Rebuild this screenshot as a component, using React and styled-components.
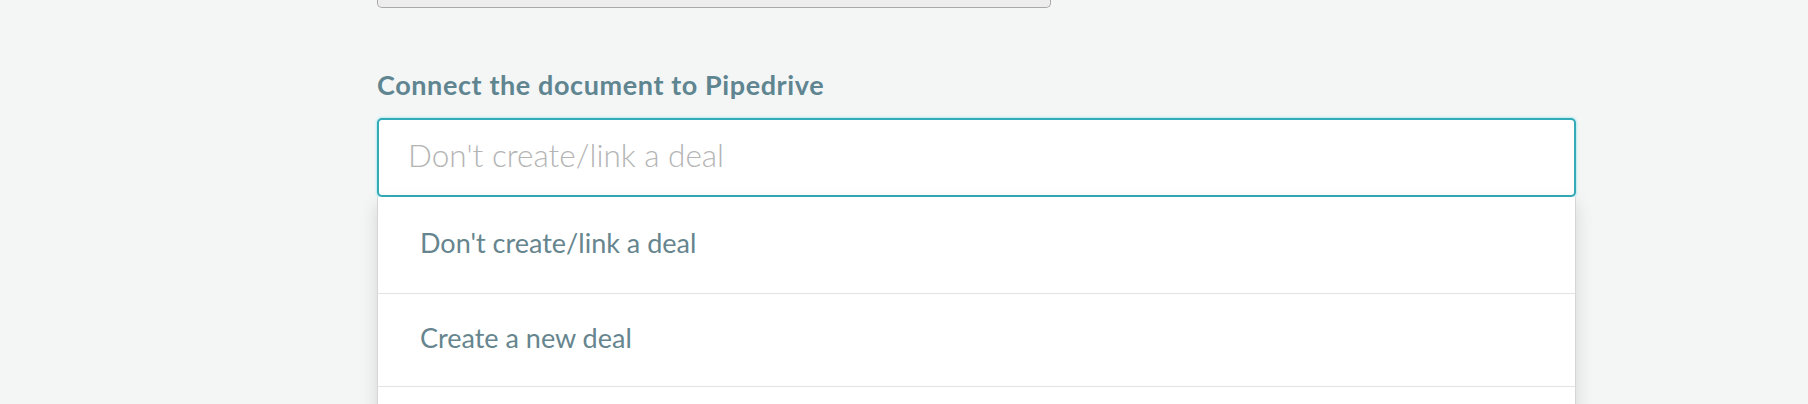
import React from "react";
import styled, { createGlobalStyle } from "styled-components";

const Global = createGlobalStyle`
  html, body { margin: 0; padding: 0; background: #f4f6f6; }
  body { font-family: Lato, "Open Sans", sans-serif; overflow: hidden; }
`;

const Page = styled.div`
  width: 1808px;
  height: 404px;
  background: #f4f6f6;
  overflow: hidden;
`;

const Column = styled.div`
  margin-left: 377px;
  width: 1199px;
  display: flex;
  flex-direction: column;
`;

const PrevField = styled.div`
  width: 674px;
  height: 8px;
  box-sizing: border-box;
  background: #ededed;
  border: 1px solid #a9a9a9;
  border-top: none;
  border-radius: 0 0 5px 5px;
`;

const Label = styled.label`
  margin-top: 62px;
  font-weight: 700;
  font-size: 27px;
  line-height: 30px;
  color: #5f8590;
  letter-spacing: 0.6px;
`;

const Field = styled.div`
  position: relative;
  margin-top: 18px;
`;

const Input = styled.input`
  display: block;
  width: 100%;
  height: 79px;
  box-sizing: border-box;
  border: 2px solid #34acb8;
  border-radius: 5px;
  box-shadow: 0 0 2px 1px rgba(110, 220, 230, 0.45);
  background: #fff;
  padding: 0 28px 6px 29px;
  font-family: Lato, sans-serif;
  font-weight: 300;
  font-size: 31.5px;
  color: #444;
  outline: none;
  &::placeholder { color: #b4b4b4; }
`;

const Menu = styled.ul`
  list-style: none;
  margin: 0;
  padding: 0;
  background: #fff;
  border: 1px solid #d6d6d6;
  border-top: none;
  box-shadow: 0 6px 16px rgba(0, 0, 0, 0.13);
`;

const Item = styled.li`
  height: 93px;
  box-sizing: border-box;
  display: flex;
  align-items: center;
  padding: 0 0 5px 42px;
  border-bottom: 1px solid #e3e3e3;
  font-size: 27px;
  font-weight: 400;
  color: #66858e;
  &:first-child { height: 97px; }
`;

export default function App() {
  return (
    <Page>
      <Global />
      <Column>
        <PrevField />
        <Label>Connect the document to Pipedrive</Label>
        <Field>
          <Input placeholder="Don't create/link a deal" readOnly />
          <Menu>
            <Item>Don't create/link a deal</Item>
            <Item>Create a new deal</Item>
            <Item>Link to an existing deal</Item>
          </Menu>
        </Field>
      </Column>
    </Page>
  );
}
